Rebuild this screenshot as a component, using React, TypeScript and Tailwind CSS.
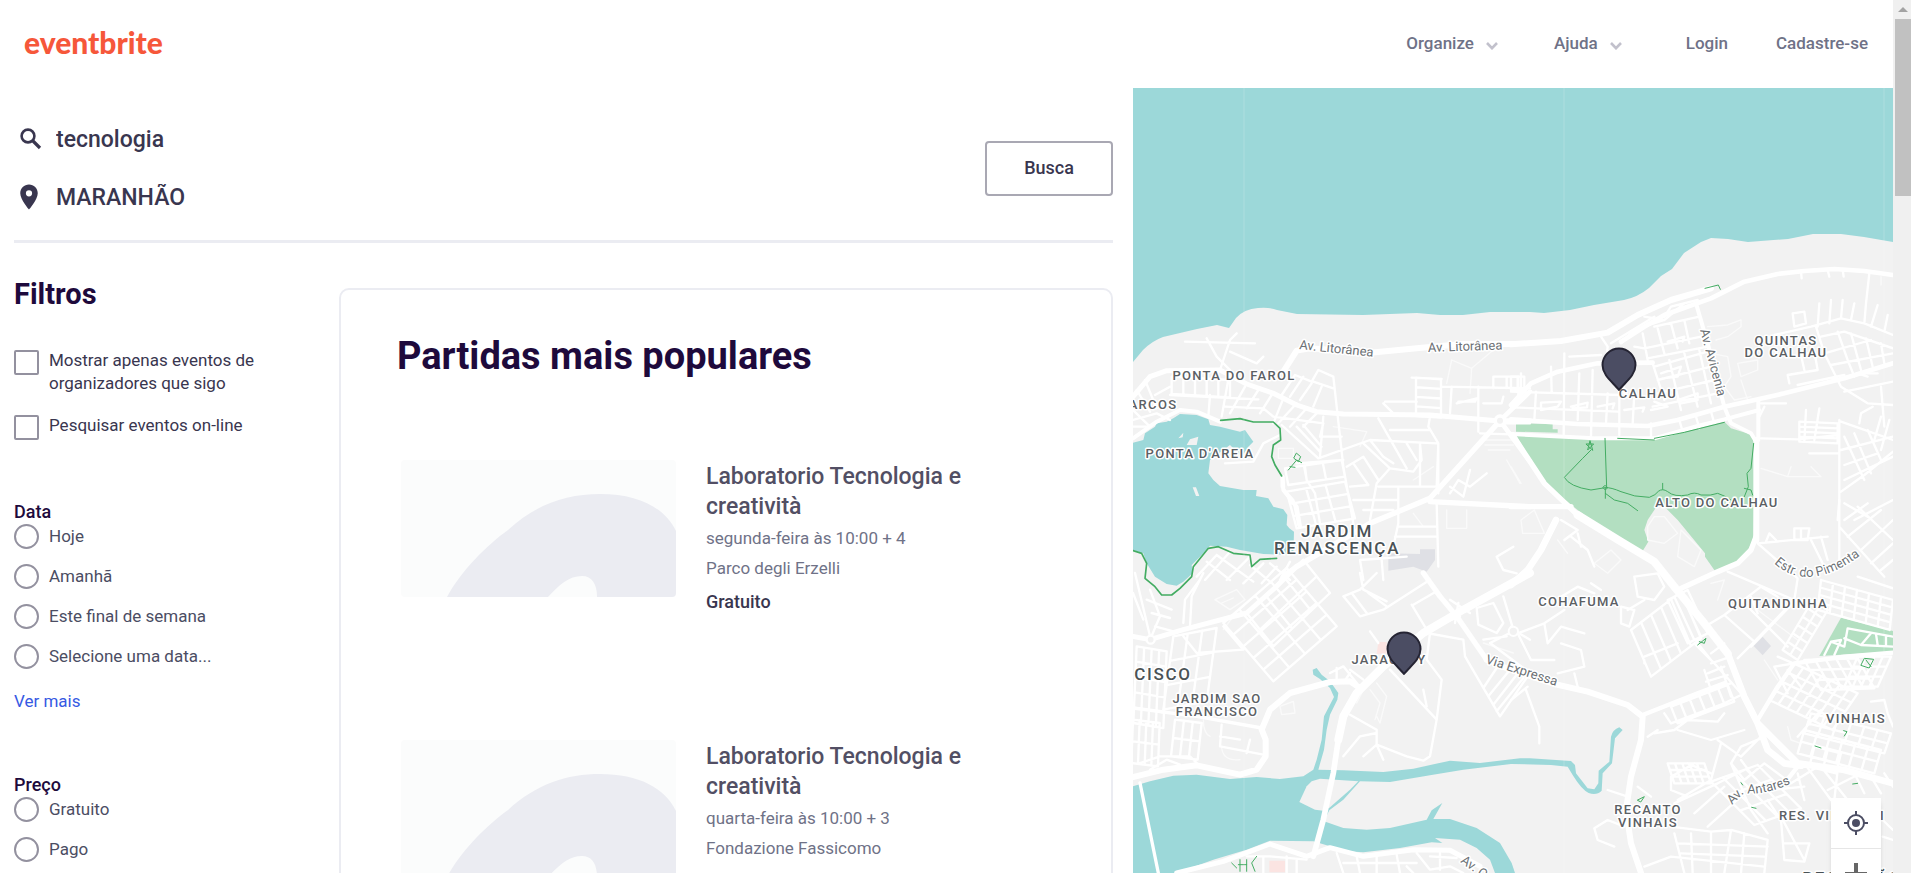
import React from "react";
import { MdLocationOn } from "react-icons/md";

const A = "translate(1130 280) scale(.33333)";
const B = "translate(1511 220) scale(.33333)";
const C = "translate(1130 573) scale(.33333)";
const D = "translate(1511 500) scale(.33333)";

type Pt = [number, number];

/** Street grid inside the parallelogram spanned by u and v. */
function grid(o: Pt, u: Pt, v: Pt, nu: number, nv: number): string {
  let d = "";
  for (let i = 0; i <= nu; i++) {
    const x = o[0] + (u[0] * i) / nu;
    const y = o[1] + (u[1] * i) / nu;
    d += `M${x} ${y}l${v[0]} ${v[1]}`;
  }
  for (let j = 0; j <= nv; j++) {
    const x = o[0] + (v[0] * j) / nv;
    const y = o[1] + (v[1] * j) / nv;
    d += `M${x} ${y}l${u[0]} ${u[1]}`;
  }
  return d;
}

const streetsA = [
  grid([125, 290], [175, 10], [0, 52], 5, 1),
  "M120 345L385 358 M240 345L235 410 M300 270L275 410 M345 320L300 400 M385 330L350 385 M425 345L390 400 M460 355L430 430 M500 370L445 430 M530 385L480 440 M560 400L520 440",
  "M455 345L495 285L545 305L565 270L610 290L640 560L670 730 M550 305L610 325 M520 290L480 350 M545 310L510 360 M575 320L550 380",
  "M285 380L400 385L430 410L580 430L570 470L635 470 M455 435L565 535L720 480L920 490 M500 440L570 515 M520 435L575 500 M580 410L570 530",
  grid([465, 565], [170, -25], [10, 50], 3, 1),
  grid([470, 635], [175, -30], [30, 110], 3, 3),
  "M455 590L455 620L490 660L505 735 M525 560L530 600L555 640L570 730 M500 550L640 540",
  "M650 560L700 530L745 600 M670 550L715 615L660 620 M700 490L780 565L740 610L720 720 M780 565L850 575L875 540L870 490 M745 415L830 565 M780 450L900 450 M720 480L760 530L790 550 M830 490L860 540",
  "M900 410L895 440L925 490L920 620L870 620L745 620 M670 660L805 660 M805 625L805 730L790 800 M700 690L790 690 M925 490L925 640 M920 670L925 860 M805 740L920 740 M795 770L920 770 M870 490L870 620",
  grid([858, 293], [75, 5], [0, 115], 1, 4),
  "M845 293L935 297 M765 365L860 365 M760 370L790 400 M935 320L1200 325 M965 320L960 400 M1045 320L1045 455 M980 370L1040 355L1035 365L985 365 M1090 290L1165 290L1165 370 M1090 290L1090 325 M1130 290L1130 325 M1060 370L1115 370L1120 350 M1100 430L1200 430 M1050 460L1200 465",
  "M200 890L260 825 M225 900L300 815 M290 900L360 830 M340 910L400 850 M395 910L440 860 M450 900L480 845 M230 845L300 900 M260 825L370 905 M360 855L420 905 M420 850L480 900",
  "M20 330L60 395 M45 300L80 385 M9 420L80 400L120 420 M9 440L60 440 M75 345L120 320 M9 390L60 440 M270 270L300 180L320 160 M230 175L260 230L300 270 M165 185L375 190 M300 215L380 250L400 230 M285 550L370 545L400 490L450 465",
  "M690 840L700 900 M755 840L760 900 M690 840L830 830 M960 620L1000 650L1020 570M1070 580L1020 620L985 600L960 640 M1150 800L1100 830L1120 870L1160 880",
].join("");

const faintA = "M950 310L965 240L1025 265L1020 340 M1025 265L1090 210 M1060 480H1160 M1065 495H1150 M1075 510H1140 M1130 540L1170 610 M950 690L950 745H1010L1010 690 M445 505H490V535H445Z M850 600L910 560 M850 700L880 740 M610 440L710 455L690 500";

const streetsB = [
  grid([0, 470], [40, 0], [0, 40], 2, 1),
  "M0 515L330 525 M30 460L30 500 M0 562L320 575 M75 515L70 600 M160 400L158 650 M205 460L200 600 M245 450L240 650 M120 440L122 515 M290 520L285 610 M325 520L325 645 M370 520L365 610 M420 610L420 650 M330 400L340 520 M90 548L150 545L140 560L90 570Z M180 560L230 548L228 562L185 565 M260 560L310 550L305 565 M340 570L400 562L395 575",
  "M175 410L270 405 M330 370L370 330L460 300 M270 350L290 380L285 430 M300 370L430 290 M395 340L410 420 M440 325L460 400 M480 310L500 385 M520 300L535 370 M370 380L400 385L570 350 M410 415L590 380 M430 320L565 290 M425 430L460 540 M475 420L510 570 M520 400L560 560 M565 390L600 550 M430 440L590 395 M440 480L600 440 M440 520L610 480 M425 560L620 520 M470 365L520 350L515 365 M450 460L510 440L500 470L455 475 M500 540L560 520L560 540L510 550 M600 575L610 610 M555 590L565 625 M505 600L515 635 M460 290L480 260L560 240 M400 290L460 300L520 250 M430 545L470 560L420 570",
  "M790 345L900 320L990 295L1060 310L1146 345 M925 250L920 320 M960 240L955 310 M995 240L990 295 M1030 250L1020 300 M1075 160L1065 250L1060 310 M1100 255L1080 320 M1130 285L1120 335 M915 320L940 400L990 500L1070 550L1146 555 M930 350L1000 335L1146 385 M980 335L1010 420L1030 470 M1020 340L1050 450 M1065 355L1085 440 M1110 370L1120 430 M940 400L1080 360 M960 435L1146 400 M1000 515L1146 485 M1050 460L1100 460 M870 155L872 175 M950 150L955 170 M995 150L998 170",
  "M835 490L830 465L920 450L910 395L870 405L880 450 M845 280L850 320L885 310L880 275Z M860 495L1000 465 M1040 460L1070 470",
  grid([865, 605], [115, 5], [0, 60], 1, 4),
  "M885 570L880 665 M925 565L910 660 M750 550L825 550 M745 590L760 560 M750 655L860 658L985 645 M985 600L985 840L980 900 M895 700L980 700 M1045 610L1050 580L1085 560 M990 605L1146 660 M990 690L1146 650 M1000 650L1060 780 M1030 640L1080 760 M1070 630L1110 720 M1110 590L1090 660 M1135 600L1110 690 M1000 735L1100 700 M1000 780L1146 710 M990 815L1060 765L1146 695 M1000 850L1070 890 M1030 900L1146 840 M1110 500L1120 620",
].join("");
const faintB = "M590 320L650 315L690 300L690 320L650 350L615 360 M600 400L650 410L660 470L640 500L670 540L720 530 M680 430L740 420L740 450L690 470Z M690 480L710 540 M750 745L830 770L930 770L900 740 M830 770L840 740 M0 740L30 790 M1110 170V195";

const streetsC = [
  grid([280, 150], [190, -165], [150, 175], 4, 5),
  grid([350, 120], [170, -160], [80, 100], 3, 2),
  "M640 70L690 50L740 0 M640 70L690 130L760 110L900 20 M665 60L710 120 M715 60L770 100 M690 0L700 50L770 85 M850 95L920 55L960 100 M845 95L890 170L990 130 M960 80L1020 120 M985 90L975 150 M890 180L1000 200L1005 250L1110 430L1200 300 M1060 200L1130 190 M1040 105L1090 90L1120 150L1100 180L1045 155Z M1120 70L1150 170L1200 200 M1150 175L1080 210L1200 300 M1075 370L1140 290 M1090 395L1160 305 M1100 415L1180 315 M1060 345L1110 270",
  "M720 175L745 210 M780 290L920 440 M900 180L890 260L935 320L920 440L900 550L880 563L830 550L740 515L740 470L660 425 M740 515L700 550 M740 480L690 490L640 550 M740 515L760 560 M880 350L890 400 M660 290L700 320 M600 300L640 280L680 330 M620 320L620 285 M640 330L660 300",
  "M15 0L60 190 M60 50L90 130L60 200 M50 80L125 110 M65 120L120 135 M75 160L130 175 M160 150L165 80L210 20 M180 160L185 70L220 0 M9 60L40 140",
  grid([20, 220], [90, 15], [-10, 230], 4, 5),
  grid([130, 190], [130, -25], [-30, 220], 3, 3),
  grid([9, 440], [80, 10], [-5, 130], 4, 2),
  grid([135, 440], [80, 10], [-12, 110], 3, 2),
  "M275 455L270 520L400 545 M270 490L330 500 M360 500L350 540 M30 570L90 550L180 550L210 580 M60 590L110 560L150 575 M280 160L340 230L200 240L160 190",
  "M620 840L640 900 M680 850L690 900 M740 850V900 M800 845L810 900 M860 840L900 890L960 880L1000 900 M640 870L860 870 M900 850L980 855 M400 850L400 900 M350 850L420 850L530 860 M500 860V900 M470 850V900 M930 840V890 M830 880L850 900",
].join("");
const faintC = "M255 80L320 50L345 80L300 110Z M275 90L310 75 M450 400L490 385L495 420L455 425Z M220 440Q220 480 240 490 M740 330L770 370L750 450L740 430 M720 350L750 390L735 440 M275 525Q280 565 330 560 M310 130L280 170 M1060 210L1150 240 M680 390L700 350";

const streetsD = [
  "M740 130L860 235L850 300 M740 130L950 110 M765 125L775 100L795 120 M850 85L895 85L890 120L850 120Z M870 85V120 M930 110L950 180 M900 120L940 200 M985 0V190 M985 80L1120 230 M1040 20L1146 120 M1000 60L1070 10 M1010 110L1110 30 M1050 150L1146 60 M1080 190L1146 130 M1110 210L1146 180",
  "M650 215L850 300 M590 375L640 345L750 260L800 290 M640 345L730 425L680 475 M730 425L850 300 M690 300L830 440 M720 290L740 340 M855 300L720 440",
  grid([905, 300], [-90, 150], [45, 30], 6, 2),
  grid([930, 240], [216, 60], [-10, 90], 6, 4),
  "M1040 230L1146 265 M790 500L850 490 M800 470L870 500 M850 490L740 660 M790 500L830 580 M830 510L870 560",
  grid([850, 490], [190, 90], [-75, 110], 7, 4),
  grid([880, 480], [160, -5], [50, 90], 5, 3),
  grid([1040, 470], [100, 0], [-40, 90], 4, 3),
  grid([360, 390], [150, -115], [60, 140], 5, 1),
  grid([470, 300], [60, -30], [60, 130], 3, 1),
  "M330 320L370 330L355 380L330 370Z M350 330L400 300 M370 230L440 220L460 260L430 300L380 290Z M400 480L400 490 M400 470L500 430",
  "M550 430L610 490L690 580 M600 490L660 470 M590 520L640 500 M585 545L650 525 M590 570L660 550 M580 510L600 570 M630 500L660 590 M640 430L600 460 M600 480L560 430",
  grid([480, 620], [170, -65], [20, 50], 6, 1),
  "M460 640L480 670L640 610L690 585 M430 700L490 690L530 660L620 665L640 640 M410 710L440 690 M500 690L600 720L700 690 M620 720L690 770L750 710 M630 730L600 840L500 900 M550 790L480 830L480 870L530 890 M530 790L600 820 M660 790L700 840L760 790L840 850L920 800 M690 780L720 820 M750 715L690 740L660 790L720 930L770 1000",
  grid([600, 845], [140, -50], [130, 130], 4, 3),
  grid([490, 850], [110, 0], [-20, -60], 5, 3),
  "M490 910L620 850L700 810 M550 940L640 860 M590 980L700 880 M480 980L600 995L660 990L770 1020L760 1119 M490 1000L520 1119 M600 1000V1119 M660 990L640 1119 M540 1000L545 1119 M700 1000L690 1119 M500 1030L770 1040 M510 1060L760 1070 M400 1100L480 1070L760 1100",
  "M380 860L420 890 M290 870L350 890 M250 985L290 960L340 980 M250 985L260 1020L310 1040 M770 900L810 960L820 1080L880 1085L895 1030L820 1030 M810 950L880 1080 M780 870L880 860 M860 820L880 900",
  grid([880, 690], [230, 60], [-20, 70], 6, 2),
  grid([900, 640], [240, 60], [-20, 60], 6, 2),
  grid([910, 740], [80, 20], [-15, 60], 2, 2),
  "M860 710L930 630 M1080 605L1120 600L1130 640L1146 680 M880 790L960 900 M930 800L1010 900 M980 810L970 900 M1030 820L1060 880 M1080 830L1110 880 M950 870L1050 820 M1120 820L1146 860 M1115 960L1146 990 M1115 1010L1146 1020",
  "M0 380L20 400L100 370L160 330 M20 400L60 480L130 480 M100 370L110 430L150 380L220 400 M140 520L220 500L210 450L150 430 M150 290L200 260L250 280 M240 250L270 270 M0 600L50 560 M45 570L85 680L85 730 M190 520L200 560 M150 60L200 90L160 120 M180 110L230 150L250 200 M200 100L210 140",
].join("");
const faintD = "M430 50L460 50L500 100L460 130L410 120L410 80Z M250 190L300 150L330 180L290 220Z M30 60L70 30L100 100L35 100Z M600 250L640 240L620 300 M510 90L570 150L550 200L500 170Z M760 480L800 540 M740 330L860 420 M830 680L840 720L870 730 M140 120L170 160";

const places: [number, number, string][] = [
  [1234, 380, "PONTA DO FAROL"],
  [1200, 458, "PONTA D'AREIA"],
  [1648, 398, "CALHAU"],
  [1786, 345, "QUINTAS"],
  [1786, 357, "DO CALHAU"],
  [1717, 507, "ALTO DO CALHAU"],
  [1579, 606, "COHAFUMA"],
  [1778, 608, "QUITANDINHA"],
  [1856, 723, "VINHAIS"],
  [1648, 814, "RECANTO"],
  [1648, 827, "VINHAIS"],
  [1832, 820, "RES. VINHAIS I"],
  [1217, 703, "JARDIM SAO"],
  [1217, 716, "FRANCISCO"],
  [1389, 664, "JARACATY"],
];

function Marker({ x, y }: { x: number; y: number }) {
  return (
    <path
      transform={`translate(${x} ${y})`}
      d="M0 0C-5 -7 -16.500 -14 -16.500 -25A16.500 16.500 0 0 1 16.500 -25C16.500 -14 5 -7 0 0Z"
      fill="#4b4d63"
      stroke="#252433"
      strokeWidth="2"
      strokeLinejoin="round"
    />
  );
}

function CityMap() {
  return (
    <svg
      viewBox="1133 88 760 785"
      preserveAspectRatio="xMinYMin slice"
      className="block h-full w-full bg-[#f2f2f2] font-['Roboto',sans-serif]"
      role="img"
      aria-label="Mapa de eventos"
    >
      <g fill="#9cd8d9">
        <path d="M1133 88H1893V242L1864 237L1841 234H1813L1788 239L1748 242L1728 239L1711 238L1701 242L1684 253L1672 269L1661 276L1649 288Q1638 297 1624 300L1594 305L1570 310L1544 313L1530 312H1490L1463 315L1440 315L1417 313L1363 315L1297 314L1277 310Q1270 307 1258 308Q1244 309 1236 318L1229 328L1217 325L1197 329L1163 337Q1152 341 1143 350L1133 362Z" />
        <path
          transform={A}
          d="M9 488L40 480L45 460L75 440L80 430L110 425L130 415L150 402L200 405L235 418L240 435L270 440L330 455L345 450L370 485L355 500L335 530L300 495L240 540L235 580L250 600L270 618L340 630L380 630L378 648L415 655L430 680L460 688L472 705L470 735L478 745L492 755L490 825L400 822L330 810L290 800L240 797L215 825L185 855L188 880L160 905L140 917L110 912L75 890L50 850L40 820L9 810Z"
        />
        <path
          transform={C}
          d="M9 640L60 625L130 608L200 605L300 618L380 612L450 618L520 610L550 590L560 560L575 500L582 430L612 372L600 345L570 318L550 305L548 290L560 285L575 305L600 325L625 360L622 380L600 425L590 470L582 530L565 590L640 592L760 597L850 587L960 563L1050 570L1170 556L1200 556L1323 564L1335 576L1338 601L1373 646L1393 649L1405 631L1406 593L1438 566L1443 491Q1448 470 1468 463L1478 471L1455 496L1446 571L1418 601L1415 653Q1400 668 1376 660Q1355 650 1328 606L1313 581L1263 576L1143 573L1000 590L900 607L780 627L690 625L640 680L598 712L582 745L640 765L710 770L780 765L890 740L905 712L937 690L910 738L960 738L1040 765L1110 810L1145 870L1155 900H1095L1080 860L1040 825L990 800L915 795L937 810L905 808L810 825L700 838L650 835L600 820L550 805L420 803L350 830L250 860L140 900H9Z"
        />
      </g>
      <g fill="#f2f2f2">
        <path transform={C} d="M508 687L530 640L545 625L570 617L685 625L660 650L600 703L580 713L555 710Z" />
        <g transform={A}>
          <path d="M145 475L160 458L158 472ZM170 495L180 478L205 470L200 495ZM188 622L198 622L208 648L198 648Z" />
        </g>
      </g>
      <g fill="#b3dfc1">
        <path transform={B} d="M15 610L125 612V628H140V638L15 635Z" />
        <path
          transform={B}
          d="M15 645L430 655L520 635L640 605L660 625L725 645L733 670L727 960L700 1010L670 1040L612 1053L582 1010L582 1000L500 900L465 865L440 855L410 900L400 930L412 965L395 993L330 965L200 870L100 790Z"
        />
        <path transform={D} d="M990 353L1146 393V455L925 468Z" />
      </g>
      <g fill="#dfe0e5">
        <path transform={A} d="M775 820L870 822L870 808H915V840L890 875L850 860L775 872Z" />
        <path transform={D} d="M755 410L780 438L755 466L728 438Z" />
      </g>
      <g fill="#fbe4e2">
        <path transform={C} d="M745 207H770V242H740ZM418 863H465V898H418Z" />
      </g>

      <g fill="none" stroke="#fafafa" strokeWidth="4" strokeLinecap="round" strokeLinejoin="round">
        <path transform={A} d={faintA} />
        <path transform={B} d={faintB} />
        <path transform={C} d={faintC} />
        <path transform={D} d={faintD} />
      </g>
      <g fill="none" stroke="#fff" strokeWidth="7" strokeLinecap="round" strokeLinejoin="round">
        <path transform={A} d={streetsA} />
        <path transform={B} d={streetsB} />
        <path transform={C} d={streetsC} />
        <path transform={D} d={streetsD} />
        <path transform={D} d="M940 465L960 425L990 420L970 465M960 425L1000 440L1010 385L1146 410M1000 415L1050 435L1080 400M1050 435L1146 440M1095 402L1100 435M1125 408V438" />
      </g>
      <g fill="none" stroke="#fff" strokeLinecap="round" strokeLinejoin="round">
        <g transform={A}>
          <path strokeWidth="15" d="M9 350L60 290L110 272L270 270L350 312L430 340L500 375L560 395L640 402L900 405L1100 422L1200 422" />
          <path strokeWidth="18" d="M460 275L500 212L540 205L720 218L860 205L1000 192L1150 192" />
          <path strokeWidth="16" d="M1110 422L900 655L720 730L500 860L460 890M900 665L1200 680" />
          <path strokeWidth="12" d="M9 475L80 425L150 390L200 395L270 425M458 590L460 630L500 680L510 740" />
          <path strokeWidth="14" d="M1110 422L1200 335M1110 422L1200 545" />
          <circle cx="1110" cy="422" r="14" strokeWidth="10" fill="#f2f2f2" />
        </g>
        <g transform={B}>
          <path strokeWidth="18" d="M0 373L150 363L290 338L380 285L480 240L600 205" />
          <path strokeWidth="14" d="M330 365L400 320L460 285L600 235L700 185L800 162L880 153L970 147L1060 153L1146 165" />
          <path strokeWidth="14" d="M0 555L60 490L140 455L260 430L425 428M0 598L200 612L410 618L500 600L640 560L820 520L1000 475L1146 430" />
          <path strokeWidth="12" d="M0 642L250 655L430 655L560 618L640 598L745 570M555 250L590 370L640 560L660 610L720 640L738 670M742 540V660" />
          <path strokeWidth="18" d="M736 660V960" />
        </g>
        <g transform={C}>
          <path strokeWidth="24" d="M1200 0L1000 110L880 180L760 280L680 360L640 430L625 500" />
          <path strokeWidth="17" d="M625 500L610 600L580 740L550 850" />
          <path strokeWidth="16" d="M880 0L930 70L980 130L1070 260" />
          <path strokeWidth="18" d="M9 612L100 590L200 577L330 605L380 590L407 550L407 500L395 470L420 410L480 360L600 327L660 325L690 345" />
          <path strokeWidth="10" d="M395 465L200 430L9 405M30 630L85 900" />
          <path strokeWidth="15" d="M9 190L60 200L160 170L350 120L440 40L500 -20M140 900L280 865L420 813L530 850L600 824L700 850L850 830L960 832L1050 880" />
          <circle cx="62" cy="200" r="12" strokeWidth="7" fill="#f2f2f2" />
          <circle cx="1150" cy="175" r="14" strokeWidth="6" fill="#f2f2f2" />
        </g>
        <g transform={D}>
          <path strokeWidth="16" d="M5 -195L100 -50L200 45" />
          <path strokeWidth="24" d="M200 45L330 125L430 185L490 260L580 370L650 460" />
          <path strokeWidth="20" d="M650 460L700 590L740 670L860 790L1000 810L1146 850M740 670L770 750L820 790L870 797" />
          <path strokeWidth="16" d="M0 20H180M510 265L620 215L680 190L720 150L735 110" />
          <path strokeWidth="20" d="M135 60L90 150L50 210L0 255" />
          <path strokeWidth="18" d="M-73 479L0 510L130 552L230 575L350 615L395 650L390 720L360 830L345 930L360 1030L390 1119" />
          <path strokeWidth="13" d="M395 645L560 580L640 550M740 660L800 560L850 490L1000 470L1146 458M860 800L820 850" />
        </g>
      </g>

      <g fill="none" stroke="#43ac62" strokeLinecap="round" strokeLinejoin="round">
        <g transform={A} strokeWidth="5">
          <path d="M272 421L330 416L370 426H430L450 445L452 480L430 495L425 530L435 555L455 588" />
          <path d="M9 812L35 820L50 850L45 895L75 920L95 945L125 945L150 925L185 890L190 860L235 805L265 800L310 820L360 825L365 860L390 838L440 835" />
          <path strokeWidth="3" d="M475 570L500 540L515 548M500 520L512 530L505 545L492 535ZM480 560L495 562" />
        </g>
        <g transform={B} strokeWidth="3">
          <path d="M240 690L215 715L160 772Q175 800 240 810L283 803Q300 802 330 815Q370 832 415 832Q435 825 442 814Q455 804 470 815Q490 832 530 825Q550 814 570 825Q600 828 620 820Q640 826 660 840M283 803V835M283 820L310 840L350 850L380 872M282 655L287 803M430 655L520 637L640 607M728 670L720 745L708 760L712 800L700 830M455 790V808" />
          <path d="M226 672H248L230 690L237 662L245 690ZM283 797L290 803L283 810L276 803ZM582 205L622 195L628 208M320 655L430 660M700 805L720 810L725 825" />
        </g>
        <g strokeWidth="3">
          <path transform={C} d="M305 870L320 885M330 860V895M350 860V895M325 875H350M380 850L365 870L375 895" />
          <path transform={D} d="M560 435L585 415L580 430L565 425M1050 495L1060 475L1088 478L1075 503ZM1065 480L1080 500M998 692L1008 695L1000 708M912 738L930 744M1025 852L1040 850M380 900L400 890L390 905ZM690 848L695 855M722 922L735 925" />
        </g>
      </g>

      <path d="M1244 88V873M1564 88V873M1884 88V873" stroke="#fff" strokeOpacity=".2" />

      <g className="fill-[#5b6064] font-medium" stroke="#fff" strokeWidth="3" strokeLinejoin="round" paintOrder="stroke">
        <g className="text-[13px] tracking-widest" textAnchor="middle">
          {places.map(([x, y, t]) => (
            <text key={`${t}${y}`} x={x} y={y}>
              {t}
            </text>
          ))}
          <text x="1153" y="409">ARCOS</text>
        </g>
        <g className="fill-[#4a5256] text-[17px] tracking-widest" textAnchor="middle">
          <text x="1337" y="537">JARDIM</text>
          <text x="1337" y="554">RENASCENÇA</text>
          <text x="1163" y="680">CISCO</text>
          <text x="1852" y="884">BEQUIMÃO</text>
        </g>
        <g className="fill-[#6c7175] text-[13px] font-normal">
          <text transform="translate(1299 349) rotate(6)">Av. Litorânea</text>
          <text transform="translate(1428 352) rotate(-2)">Av. Litorânea</text>
          <text transform="translate(1700 330) rotate(75)">Av. Avicenia</text>
          <text transform="translate(1485 663) rotate(18)">Via Expressa</text>
          <text transform="translate(1460 862) rotate(36)">Av. Odorico</text>
          <path id="pimenta" d="M1774 563Q1809 596 1866 551" fill="none" stroke="none" />
          <text>
            <textPath href="#pimenta">Estr. do Pimenta</textPath>
          </text>
          <path id="antares" d="M1732 805L1744 793Q1768 796 1800 779" fill="none" stroke="none" />
          <text>
            <textPath href="#antares">Av. Antares</textPath>
          </text>
        </g>
      </g>

      <Marker x={1619} y={390} />
      <Marker x={1404} y={674} />
    </svg>
  );
}

function NavMenu({ label }: { label: string }) {
  return (
    <button type="button" className="flex items-center gap-3">
      {label}
      <svg viewBox="0 0 12 8" className="mt-1 h-2 w-3" aria-hidden="true">
        <path d="M1 1L6 6.200L11 1" fill="none" stroke="#c2c1cc" strokeWidth="2.600" />
      </svg>
    </button>
  );
}

function Header() {
  return (
    <header className="flex h-22 shrink-0 items-center justify-between bg-white pr-[25px] pl-6">
      <a href="#inicio" className="pb-1 font-['Lato',sans-serif] text-[30px] leading-none font-black text-[#f6573a]">
        eventbrite
      </a>
      <nav className="flex items-center text-[17px] font-medium text-[#6f7287]">
        <NavMenu label="Organize" />
        <div className="ml-14">
          <NavMenu label="Ajuda" />
        </div>
        <a href="#login" className="ml-16">Login</a>
        <a href="#cadastro" className="ml-12">Cadastre-se</a>
      </nav>
    </header>
  );
}

function SearchForm() {
  return (
    <form className="flex items-center justify-between border-b-3 border-[#ebecf2] pt-[22px] pb-[14px]" onSubmit={(e) => e.preventDefault()}>
      <div className="flex-1 text-[23px] font-medium text-[#39364f]">
        <div className="flex h-[58px] items-center gap-3">
          <svg viewBox="0 0 30 30" className="size-[30px]" fill="none" stroke="#39364f" strokeWidth="2.600" aria-hidden="true">
            <circle cx="14" cy="12" r="6.400" />
            <path d="M18.500 16.500L26 24" strokeWidth="3.200" />
          </svg>
          <input aria-label="Busque um evento" className="h-10 min-w-0 flex-1 outline-none" defaultValue="tecnologia" />
        </div>
        <div className="flex h-[58px] items-center gap-3">
          <MdLocationOn className="size-[30px] text-[#39364f]" aria-hidden="true" />
          <input aria-label="Local" className="h-10 min-w-0 flex-1 outline-none" defaultValue="MARANHÃO" />
        </div>
      </div>
      <button type="submit" className="h-[55px] w-32 rounded border-2 border-[#a9a8b3] text-lg font-medium text-[#39364f]">
        Busca
      </button>
    </form>
  );
}

function CheckRow({ label }: { label: string }) {
  return (
    <label className="flex items-start gap-[10px] leading-[23px] text-[#39364f]">
      <input type="checkbox" className="mt-px size-[25px] shrink-0 appearance-none rounded-xs border-2 border-[#93919f]" />
      <span className="max-w-[220px]">{label}</span>
    </label>
  );
}

function RadioGroup({ title, name, options }: { title: string; name: string; options: string[] }) {
  return (
    <fieldset className="mt-[60px]">
      <legend className="text-lg leading-6 font-medium text-[#1e0a3c]">{title}</legend>
      <div className="flex flex-col gap-[15px]">
        {options.map((o) => (
          <label key={o} className="flex items-center gap-[10px] leading-[25px] text-[#4b4d63]">
            <input type="radio" name={name} className="size-[25px] shrink-0 appearance-none rounded-full border-2 border-[#93919f]" />
            {o}
          </label>
        ))}
      </div>
    </fieldset>
  );
}

function Filters() {
  return (
    <aside className="w-[325px] shrink-0 pt-[31px] text-[17px]">
      <h2 className="text-[29px] leading-10 font-bold text-[#1e0a3c]">Filtros</h2>
      <div className="mt-[35px] flex flex-col gap-[19px]">
        <CheckRow label="Mostrar apenas eventos de organizadores que sigo" />
        <CheckRow label="Pesquisar eventos on-line" />
      </div>
      <RadioGroup title="Data" name="data" options={["Hoje", "Amanhã", "Este final de semana", "Selecione uma data..."]} />
      <a href="#mais" className="mt-5 block leading-6 text-[#3659e3]">Ver mais</a>
      <RadioGroup title="Preço" name="preco" options={["Gratuito", "Pago"]} />
    </aside>
  );
}

type EventInfo = { title: string; date: string; venue: string; price?: string };

const events: EventInfo[] = [
  { title: "Laboratorio Tecnologia e creatività", date: "segunda-feira às 10:00 + 4", venue: "Parco degli Erzelli", price: "Gratuito" },
  { title: "Laboratorio Tecnologia e creatività", date: "quarta-feira às 10:00 + 3", venue: "Fondazione Fassicomo" },
];

function EventCard({ event }: { event: EventInfo }) {
  return (
    <article className="flex h-[280px] items-start gap-[30px]">
      <svg viewBox="0 0 275 137" className="w-[275px] shrink-0 rounded bg-[#fbfcfc]" aria-hidden="true">
        <path
          d="M46 137C60 111 86 85 107 70C135 44 166 34 199 34C238 34 264 48 275 71V137H196C196 124 191 116 181 116C168 116 158 125 147 137Z"
          fill="#ebecf2"
        />
      </svg>
      <div className="mt-[2px] max-w-[280px] text-[17px] leading-[30px] text-[#6f7287]">
        <h3 className="mb-px text-[23px] leading-[30px] font-medium text-[#524f64]">{event.title}</h3>
        <p>{event.date}</p>
        <p>{event.venue}</p>
        {event.price && <p className="mt-1 text-lg leading-[30px] font-medium text-[#39364f]">{event.price}</p>}
      </div>
    </article>
  );
}

function ScrollBar() {
  return (
    <div className="flex w-[18px] shrink-0 flex-col bg-[#f0f0f0] pl-[2px]" aria-hidden="true">
      <svg viewBox="0 0 16 19" className="h-[19px] w-4">
        <path d="M3 12L8 7L13 12Z" fill="#a3a3a3" />
      </svg>
      <div className="h-[177px] bg-[#c1c1c1]" />
    </div>
  );
}

export default function App() {
  return (
    <div className="flex h-screen overflow-hidden bg-white font-['Roboto','Liberation_Sans',sans-serif]">
      <div className="flex min-w-0 flex-1 flex-col">
        <Header />
        <div className="grid min-h-0 flex-1 grid-cols-[1133fr_760fr]">
          <main className="min-h-0 overflow-hidden pr-5 pl-[14px]">
            <SearchForm />
            <div className="flex items-start">
              <Filters />
              <section className="mt-[45px] min-w-0 flex-1 rounded-[10px] border-2 border-[#ebecf2] px-14 pt-[42px]">
                <h1 className="text-[38px] leading-[48px] font-bold text-[#1e0a3c]">Partidas mais populares</h1>
                <div className="mt-20 pl-1">
                  {events.map((e) => (
                    <EventCard key={e.date} event={e} />
                  ))}
                </div>
              </section>
            </div>
          </main>
          <div className="relative min-h-0 overflow-hidden">
            <CityMap />
            <div className="absolute top-[710px] right-3 flex flex-col gap-px bg-[#e6e6e6] shadow-md">
              <button type="button" aria-label="Minha localização" className="flex size-[50px] items-center justify-center bg-white">
                <svg viewBox="0 0 24 24" className="size-6" fill="none" stroke="#4b4d63" strokeWidth="2" aria-hidden="true">
                  <circle cx="12" cy="12" r="8" />
                  <circle cx="12" cy="12" r="4" fill="#4b4d63" stroke="none" />
                  <path d="M12 0V5M12 19V24M0 12H5M19 12H24" />
                </svg>
              </button>
              <button type="button" aria-label="Aumentar zoom" className="flex size-[50px] items-center justify-center bg-white">
                <svg viewBox="0 0 24 24" className="size-6" aria-hidden="true">
                  <path d="M10 1H14V10H23V14H14V23H10V14H1V10H10Z" fill="#666" />
                </svg>
              </button>
            </div>
          </div>
        </div>
      </div>
      <ScrollBar />
    </div>
  );
}
